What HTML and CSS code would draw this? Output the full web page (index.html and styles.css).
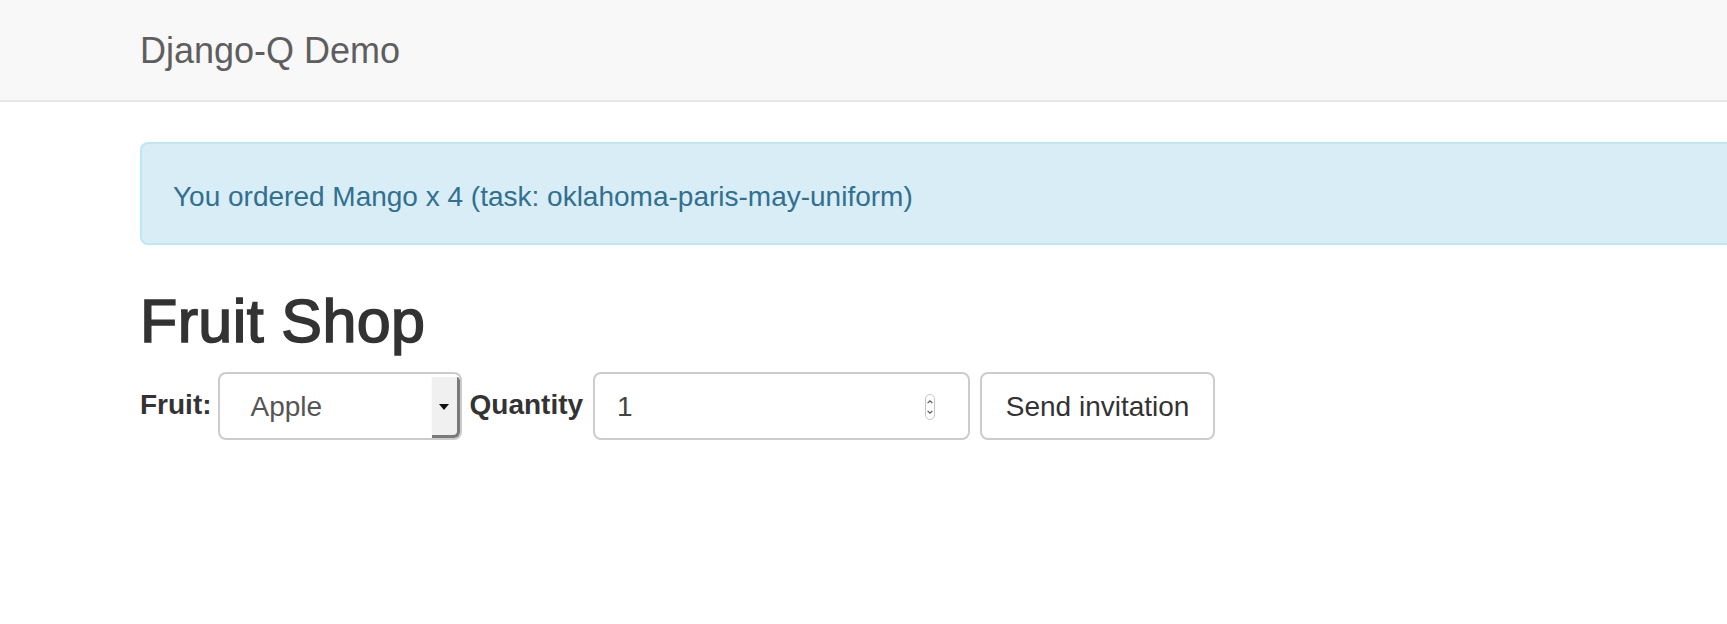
FILE: index.html
```html
<!DOCTYPE html>
<html lang="en">
<head>
<meta charset="utf-8">
<title>Django-Q Demo</title>
<link rel="stylesheet" href="styles.css">
</head>
<body>
<nav class="navbar">
  <div class="container">
    <a class="brand" href="#">Django-Q Demo</a>
  </div>
</nav>
<main class="container">
  <div class="alert">You ordered Mango x 4 (task: oklahoma-paris-may-uniform)</div>
  <h2 class="title">Fruit Shop</h2>
  <form class="order-form">
    <label class="label label-fruit">Fruit:</label>
    <div class="select">
      <span class="select-value">Apple</span>
      <span class="select-btn">
        <svg width="10" height="6" viewBox="0 0 10 6"><polygon points="0,0 10,0 5,6" fill="#111"/></svg>
      </span>
    </div>
    <label class="label label-qty">Quantity</label>
    <div class="number">
      <span class="number-value">1</span>
      <svg class="spinner" width="10" height="26" viewBox="0 0 10 26">
        <rect x="0.5" y="0.5" width="9" height="25" rx="4.5" fill="#fff" stroke="#c4c4c4"/>
        <polyline points="2.6,9.2 5,6.8 7.4,9.2" fill="none" stroke="#555" stroke-width="1.2"/>
        <polyline points="2.6,16.8 5,19.2 7.4,16.8" fill="none" stroke="#555" stroke-width="1.2"/>
      </svg>
    </div>
    <button class="btn" type="button">Send invitation</button>
  </form>
</main>
</body>
</html>
```

FILE: styles.css
```css
html, body {
  margin: 0;
  padding: 0;
  overflow: hidden;
  background: #fff;
  font-family: "Liberation Sans", Arial, Helvetica, sans-serif;
  color: #333;
}

.container {
  width: 2400px;
  padding-left: 140px;
  box-sizing: border-box;
}

.navbar {
  height: 100px;
  background: #f8f8f8;
  border-bottom: 2px solid #e7e7e7;
}

.brand {
  display: block;
  padding-top: 2px;
  font-size: 36px;
  line-height: 98px;
  color: #5e5e5e;
  text-decoration: none;
}

.alert {
  margin-top: 40px;
  height: 103px;
  box-sizing: border-box;
  padding: 33px 31px 26px;
  border: 2px solid #bce8f1;
  border-radius: 8px;
  background: #d9edf7;
  color: #31708f;
  font-size: 28px;
  line-height: 40px;
}

.title {
  margin: 43px 0 17px;
  font-size: 61px;
  line-height: 67px;
  font-weight: 500;
  letter-spacing: 0.4px;
  color: #333;
  -webkit-text-stroke: 1.6px #333;
}

.order-form {
  display: flex;
  align-items: flex-start;
  height: 68px;
}

.label {
  font-size: 28px;
  font-weight: bold;
  line-height: 66px;
  color: #333;
}

.label-fruit { margin-right: 6px; }
.label-qty { margin-right: 10px; }

.select {
  display: flex;
  width: 244px;
  height: 68px;
  box-sizing: border-box;
  border: 2px solid #ccc;
  border-radius: 8px;
  margin-right: 8px;
  overflow: hidden;
  background: #fff;
}

.select-value {
  flex: 1;
  padding: 2px 0 0 31px;
  font-size: 28px;
  line-height: 62px;
  color: #555;
}

.select-btn {
  display: flex;
  align-items: center;
  justify-content: center;
  width: 29px;
  padding: 0 3px 2px 0;
  box-sizing: border-box;
  background: #f0f0f0;
  border-left: 1px solid #fafafa;
  box-shadow: inset -3px -3px 0 #7a7a7a;
  border-radius: 0 4px 4px 0;
  margin-top: 3px;
}

.number {
  display: flex;
  align-items: center;
  width: 377px;
  height: 68px;
  box-sizing: border-box;
  border: 2px solid #ccc;
  border-radius: 8px;
  padding: 0 33px 0 22px;
  margin-right: 10px;
  background: #fff;
}

.number-value {
  flex: 1;
  padding-top: 2px;
  font-size: 28px;
  line-height: 62px;
  color: #444;
}

.spinner {
  display: block;
  margin-top: 1px;
}

.btn {
  height: 68px;
  box-sizing: border-box;
  width: 235px;
  padding: 2px 0 0;
  border: 2px solid #ccc;
  border-radius: 8px;
  background: #fff;
  font-family: "Liberation Sans", Arial, Helvetica, sans-serif;
  font-size: 28px;
  line-height: 62px;
  color: #333;
}
```
